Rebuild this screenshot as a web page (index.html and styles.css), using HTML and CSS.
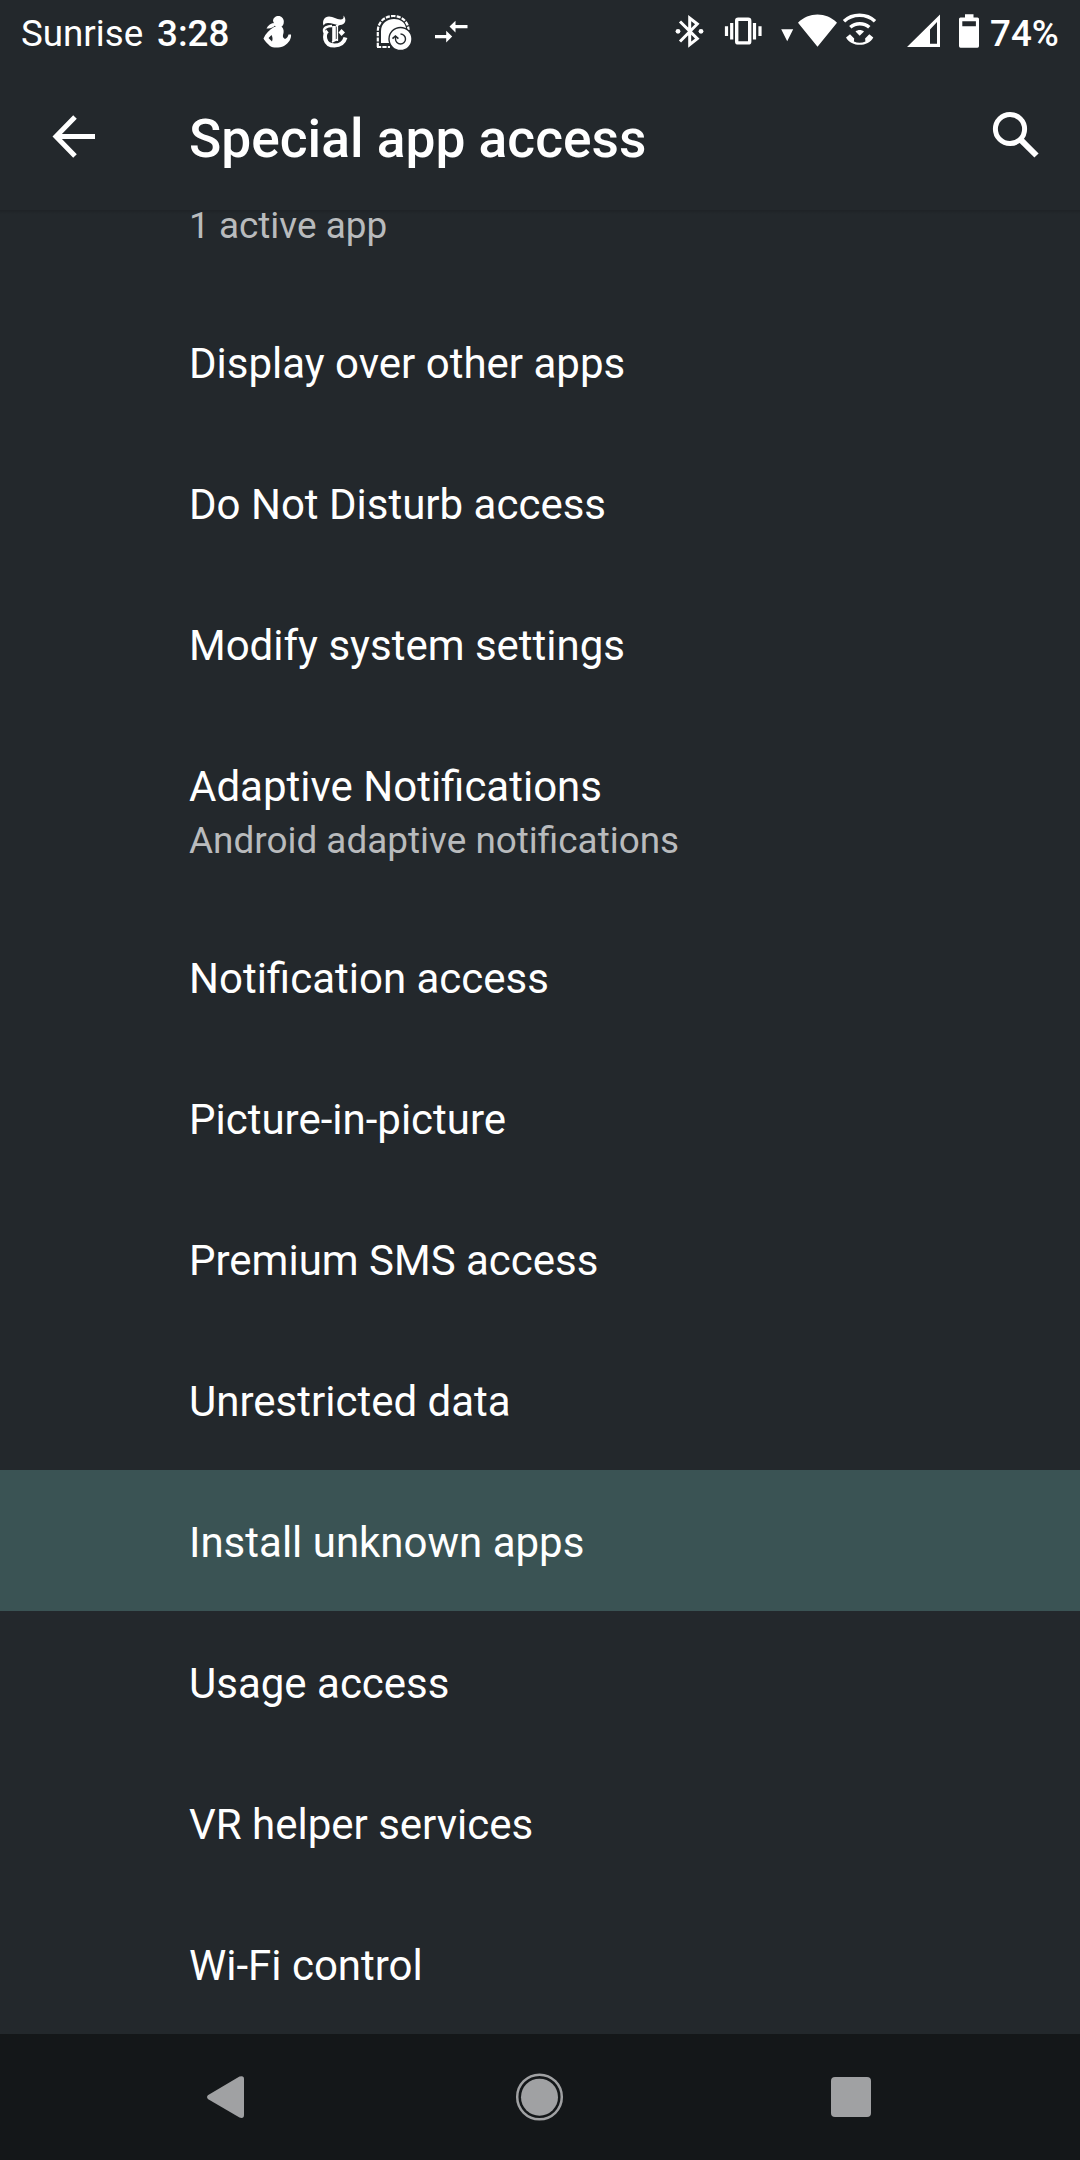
FILE: index.html
```html
<!DOCTYPE html>
<html lang="en">
<head>
<meta charset="utf-8">
<title>Special app access</title>
<link rel="stylesheet" href="styles.css">
</head>
<body>
<div class="screen">
  <div class="status">
    <span class="carrier">Sunrise</span>
    <span class="clock">3:28</span>
    <div class="notifications">
      <!-- fitness -->
      <svg width="44" height="64" viewBox="256 0 44 64" fill="#fff">
        <path d="M273 21c0-3 2.500-5 5.500-5s5.300 2.500 5.300 5.500-1 4.500-3 6h-5z"/>
        <path d="M275 23c-4 0-7 2-8.500 5.500 4 .5 7-1 9-3.500z"/>
        <path fill-rule="evenodd" d="M274 27h8c2 2 2 5 1 8-.5 2 .5 3 2 4 2-1 3-2.500 3.500-4.500h2.500c.5 4-2 8.500-7 11.500-5 2-11 2-14 0-1-1-5-4.500-6.500-7.500 2-5 6-8.500 10.500-11.500zM271.500 35l-3 3 3.500 3.500c1-3 .5-4.500-.5-6.500z"/>
      </svg>
      <!-- newspaper emblem -->
      <svg width="60" height="64" viewBox="306 0 60 64" fill="none" stroke="#fff">
        <path d="M323.500 25.500c-1.500-5 1-9 5.500-9 4.500 0 7.500 3 11.500 3 2.500 0 3.500-1.500 3-4 3.500 4 2 9.500-3.500 9.500-4.500 0-8-2-12-2-2 0-3.500.8-4.500 2.500z" fill="#fff" stroke="none"/>
        <path d="M332 26c-5 0-8.500 2-8 5 .3 2 2 2.500 3 2.500" stroke-width="2.400"/>
        <path d="M327.500 31c-4 3-4 14.500 7 14.500 5.500 0 9.500-3 11-8" stroke-width="4"/>
        <path d="M334 26v15" stroke-width="3.600"/>
        <path d="M337.400 25v16M332 42l6-3M336 26l4-2" stroke-width="1.400"/>
        <path d="M341.500 29l3.500 3.500-3.500 3.500-3-3.500z" fill="#fff" stroke="none"/>
      </svg>
      <!-- update badge -->
      <svg width="54" height="64" viewBox="366 0 54 64" fill="none" stroke="#fff">
        <path d="M381 43V31c0-15 23-16 25-3v15h-25z" fill="#fff" stroke="none"/>
        <path d="M377.800 47V31c0-8 6-15 15.500-15s15.200 7 15.200 14M377 47h13" stroke-width="2.200" stroke-dasharray="4.200 1.200"/>
        <circle cx="400.500" cy="39" r="11.500" fill="#fff" stroke="#23282c" stroke-width="1.400"/>
        <path d="M395.500 36.500v2.500a5 5 0 1 0 5-5" stroke="#23282c" stroke-width="1.400"/>
        <path d="M392.500 38.700l2.900-2.700 3 2.700" stroke="#23282c" stroke-width="1.600"/>
      </svg>
      <!-- data transfer -->
      <svg width="50" height="64" viewBox="426 0 50 64" fill="#fff">
        <path d="M467.500 25v3.300h-12v4.200l-6-5.900 6-5.900V25zM435 35h11.200v-4.300l6 5.900-6 5.900v-4.300H435z"/>
      </svg>
    </div>
    <div class="system">
      <!-- bluetooth connected -->
      <svg width="44" height="64" viewBox="668 0 44 64">
        <path d="M680 21.500l17.300 17.200-7.600 6V18l7.600 6L680 41.500" fill="none" stroke="#fff" stroke-width="3"/>
        <circle cx="678" cy="31.300" r="2.400" fill="#fff"/><circle cx="701" cy="31.300" r="2.400" fill="#fff"/>
      </svg>
      <!-- vibrate -->
      <svg width="56" height="64" viewBox="716 0 56 64" fill="none" stroke="#fff">
        <rect x="736.700" y="19.300" width="13" height="23.600" rx="1.500" stroke-width="3.400"/>
        <path d="M731.700 23v16.500M754.500 23v16.500M726.500 26.300v9.800M760 26.300v9.800" stroke-width="3.200"/>
      </svg>
      <!-- wifi -->
      <svg width="64" height="64" viewBox="776 0 64 64" fill="#fff">
        <path d="M781.200 29.300h12l-6 12zM817.500 46.700l-19.500-24c10.500-11 28.500-11 39 0z"/>
      </svg>
      <!-- wifi calling -->
      <svg width="44" height="64" viewBox="840 0 44 64" fill="none" stroke="#fff">
        <path d="M844 21.300c8.500-8 22.500-8 31 0M850.300 27.200c5.300-4.700 13.700-4.700 19 0" stroke-width="3.500"/>
        <path d="M859.700 35.700l-4.200-4.200c2.300-2 6.200-2 8.500 0z" fill="#fff" stroke="none"/>
        <path d="M846 37.500l4-3.300 4.200 4.300-.3 3c3.500 1.600 8 1.600 11.500 0l-.3-3 4.200-4.300 4 3.300c-5 9.800-22 9.800-27.300 0z" fill="#fff" stroke="none"/>
      </svg>
      <!-- mobile signal -->
      <svg width="46" height="64" viewBox="902 0 46 64" fill="#fff">
        <path fill-rule="evenodd" d="M940 14.500V47h-33zM937 22l-7 7.500V43.800h7z"/>
      </svg>
      <!-- battery -->
      <svg width="36" height="64" viewBox="952 0 36 64" fill="#fff">
        <path fill-rule="evenodd" d="M965 14.300h8.500v3.200h4q1.500 0 1.500 1.500V46q0 1.700-1.500 1.700h-17Q959 47.700 959 46V19q0-1.500 1.500-1.500h4.500zM962.300 21.200v5h13.600v-5z"/>
      </svg>
      <span class="percent">74%</span>
    </div>
  </div>
  <header class="appbar">
    <svg class="back" width="54" height="54" viewBox="46 110 54 54" fill="none" stroke="#fff" stroke-width="5">
      <path d="M95 136.500H57M75 117L56 136.500 75 156"/>
    </svg>
    <h1>Special app access</h1>
    <svg class="search" width="54" height="54" viewBox="988 108 54 54" fill="none" stroke="#fff">
      <circle cx="1010" cy="129" r="14.600" stroke-width="5"/>
      <path d="M1020.300 139.300L1036.500 155.500" stroke-width="6"/>
    </svg>
  </header>
  <main class="list">
    <div class="row partial"><p>1 active app</p></div>
    <div class="row">Display over other apps</div>
    <div class="row">Do Not Disturb access</div>
    <div class="row">Modify system settings</div>
    <div class="row tall">Adaptive Notifications<p>Android adaptive notifications</p></div>
    <div class="row">Notification access</div>
    <div class="row">Picture-in-picture</div>
    <div class="row">Premium SMS access</div>
    <div class="row">Unrestricted data</div>
    <div class="row selected">Install unknown apps</div>
    <div class="row">Usage access</div>
    <div class="row">VR helper services</div>
    <div class="row">Wi-Fi control</div>
  </main>
  <nav class="navbar">
    <svg width="60" height="60" viewBox="195 2067 60 60" fill="#a0a1a3">
      <path d="M207.800 2095.300L239.500 2076.600Q244 2075 244 2079V2115Q244 2119 239.500 2117.600L207.800 2098.900Q206 2097 207.800 2095.300z"/>
    </svg>
    <svg width="60" height="60" viewBox="508 2066.500 60 60">
      <circle cx="539.500" cy="2096.500" r="22.300" fill="none" stroke="#a0a1a3" stroke-width="2.500"/>
      <circle cx="539.500" cy="2096.700" r="18.500" fill="#a0a1a3"/>
    </svg>
    <svg width="60" height="60" viewBox="821 2067 60 60">
      <rect x="831" y="2077" width="40" height="40" rx="4" fill="#a0a1a3"/>
    </svg>
  </nav>
</div>
</body>
</html>
```
FILE: styles.css
```css
* { box-sizing: border-box; }

body {
  margin: 0;
  background: #23282c;
  color: #fff;
  font-family: Roboto, "Noto Sans", sans-serif;
}

.screen {
  width: 1080px;
  height: 2160px;
  display: flex;
  flex-direction: column;
  overflow: hidden;
}

svg { display: block; flex: none; }

p, h1 { margin: 0; }

.status {
  height: 64px;
  display: flex;
  align-items: flex-start;
  padding: 0 21px;
  font-size: 36.75px;
  line-height: 67px;
  white-space: nowrap;
}

.carrier { width: 136px; }
.clock { width: 99px; font-weight: 500; }
.notifications { display: flex; gap: 6px; }
.notifications svg:nth-child(n+3) { margin-left: -6px; }
.notifications svg:nth-child(4) { margin-left: 0; }

.system {
  display: flex;
  margin-left: auto;
}
.system svg:nth-child(2), .system svg:nth-child(3), .system svg:nth-child(6) { margin-left: 4px; }
.system svg:nth-child(5) { margin-left: 18px; }
.percent { width: 71px; padding-left: 2px; font-weight: 500; }

.appbar {
  height: 146px;
  flex: none;
  display: flex;
  align-items: flex-start;
}
.back { margin: 46px 0 0 46px; }
.appbar h1 {
  margin: 44px 0 0 89px;
  font-size: 53.3px;
  line-height: 62px;
  font-weight: 500;
}
.search { margin: 44px 38px 0 auto; }

.list {
  height: 1824px;
  flex: none;
  background: linear-gradient(rgba(0, 0, 0, .14), transparent 4px);
}

.row {
  height: 141px;
  padding: 44px 0 0 189px;
  font-size: 42px;
  line-height: 57px;
}
.row p {
  margin-top: 1px;
  font-size: 36.9px;
  line-height: 50px;
  color: #b9bbbd;
}
.row.partial { height: 81px; padding-top: 0; }
.row.partial p { margin-top: 0; line-height: 32px; }
.row.tall { height: 192px; }
.row.selected { background: #3a5354; }

.navbar {
  height: 126px;
  flex: none;
  display: flex;
  justify-content: space-between;
  align-items: center;
  padding: 0 199px 0 195px;
  background: #141719;
}
```
